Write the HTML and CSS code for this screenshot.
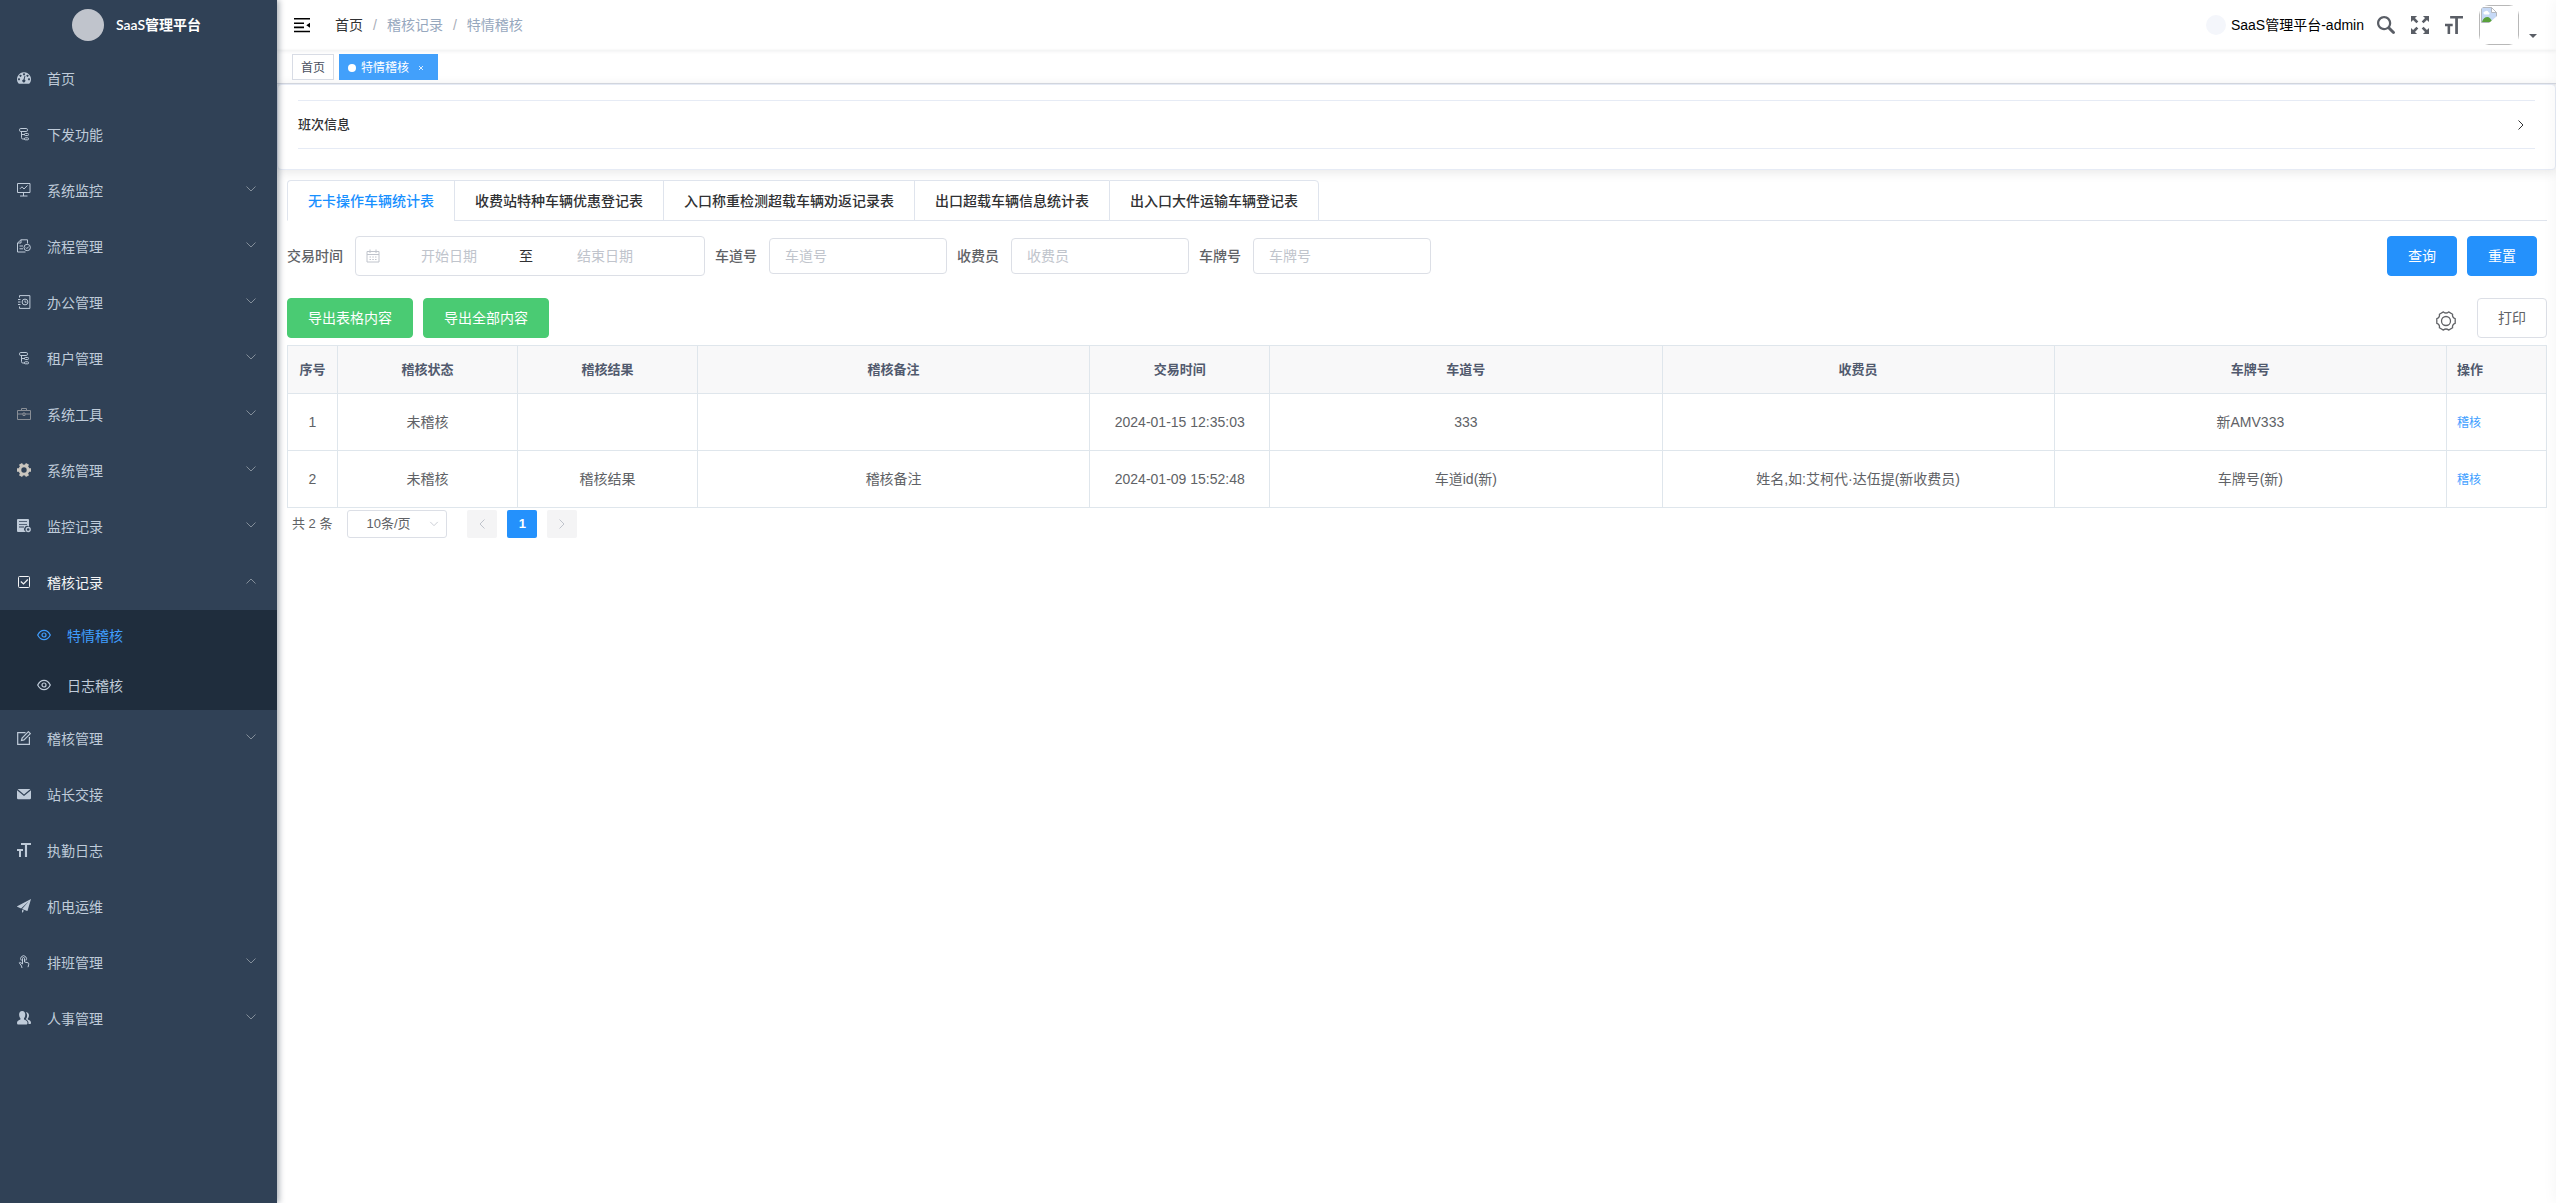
FILE: index.html
```html
<!DOCTYPE html>
<html lang="zh-CN">
<head>
<meta charset="utf-8">
<title>SaaS管理平台</title>
<link rel="stylesheet" href="styles.css">
</head>
<body>
<svg class="sprite" aria-hidden="true">
  <symbol id="i-down" viewBox="0 0 12 12"><path d="M1.500 3.500 6 8l4.500-4.500" fill="none" stroke="currentColor"/></symbol>
  <symbol id="i-tree" viewBox="0 0 14 14"><g fill="none" stroke="currentColor"><rect x="2.500" y="1.500" width="8" height="3" rx="1.300"/><path d="M4.500 4.500v6.200q0 1.300 1.300 1.300H8M4.500 7.500H8"/><rect x="7.500" y="6.500" width="4" height="2" rx=".8"/><rect x="7.500" y="10.800" width="4" height="2" rx=".8"/></g></symbol>
  <symbol id="i-size" viewBox="0 0 128 128"><path fill="currentColor" d="M0 54.857h54.796v18.286H36.531V128H18.265V73.143H0V54.857zm127.857-36.571H91.935V128H72.456V18.286H36.534V0h91.326l-.003 18.286z"/></symbol>
  <symbol id="i-eye" viewBox="0 0 14 14"><path d="M.7 7C2.200 4 4.400 2.300 7 2.300S11.800 4 13.300 7C11.800 10 9.600 11.700 7 11.700S2.200 10 .7 7z" fill="none" stroke="currentColor" stroke-width="1.200"/><circle cx="7" cy="7" r="2" fill="none" stroke="currentColor" stroke-width="1.200"/></symbol>
</svg>
<div class="app">
  <aside class="sidebar">
    <a class="logo" href="#"><span class="logo-mark"></span><span class="logo-title">SaaS管理平台</span></a>
    <nav class="menu">
      <a class="item" href="#"><svg class="icon" viewBox="0 0 14 14"><path fill="currentColor" fill-rule="evenodd" d="M7 1.300a7 7 0 0 1 5.700 11q-.3.400-.8.400H2.100q-.5 0-.8-.4A7 7 0 0 1 7 1.300zM7 2.300a1 1 0 1 0 .01 0zM3.500 3.800a1 1 0 1 0 .01 0zM10.500 3.800a1 1 0 1 0 .01 0zM2 7.300a1 1 0 1 0 .01 0zM12 7.300a1 1 0 1 0 .01 0zM7.600 4.800 6.500 8.400a1.500 1.500 0 1 0 1.100.2L8.400 5z"/></svg><span>首页</span></a>
      <a class="item" href="#"><svg class="icon"><use href="#i-tree"/></svg><span>下发功能</span></a>
      <a class="item" href="#"><svg class="icon" viewBox="0 0 14 14"><path fill="none" stroke="currentColor" d="M.5.500h12.500v9H.5zM6.500 9.500v3.500M3 13h7.500M3 5.800l2-2 2 2.200 3.500-3.600"/></svg><span>系统监控</span><svg class="arrow"><use href="#i-down"/></svg></a>
      <a class="item" href="#"><svg class="icon" viewBox="0 0 14 14"><g fill="none" stroke="currentColor"><path d="M10.500 4.500V.8H4L.5 4v9h8M4 .8V4H.5M2.500 7h3.500M2.500 9.800h3.500"/><circle cx="10.200" cy="8.500" r="3.200"/><path d="m8.800 8.500 1.100 1.100 1.800-2"/></g></svg><span>流程管理</span><svg class="arrow"><use href="#i-down"/></svg></a>
      <a class="item" href="#"><svg class="icon" viewBox="0 0 14 14"><g fill="none" stroke="currentColor"><path d="M2.500 2.500V.6h10.400v12.800H2.500v-1.900M1 4.500h2.500M1 7h2.500M1 9.500h2.500"/><circle cx="8" cy="7" r="2.900"/><path d="M8 5.500V7.200h1.500"/></g></svg><span>办公管理</span><svg class="arrow"><use href="#i-down"/></svg></a>
      <a class="item" href="#"><svg class="icon"><use href="#i-tree"/></svg><span>租户管理</span><svg class="arrow"><use href="#i-down"/></svg></a>
      <a class="item" href="#"><svg class="icon icon-gray" viewBox="0 0 14 14"><path fill="none" stroke="currentColor" d="M.5 3.500h13v9H.5zM4.500 3.500V1.500h5v2M.5 7H6M8 7h5.500M6 6h2v2.500H6z"/></svg><span>系统工具</span><svg class="arrow"><use href="#i-down"/></svg></a>
      <a class="item" href="#"><svg class="icon icon-sand" viewBox="0 0 14 14"><circle cx="7" cy="7" r="4.100" fill="none" stroke="currentColor" stroke-width="2.800"/><path stroke="currentColor" stroke-width="3.600" d="M10.900 7H14M3.100 7H0M8.900 10.400l1.600 2.700M5.100 3.600 3.500.9M5.100 10.400l-1.600 2.700M8.900 3.600l1.600-2.700"/></svg><span>系统管理</span><svg class="arrow"><use href="#i-down"/></svg></a>
      <a class="item" href="#"><svg class="icon" viewBox="0 0 14 14"><path fill="currentColor" fill-rule="evenodd" d="M1 0h10q1 0 1 1v6.600a3 3 0 0 0-3.600 4.900l.5.500H1q-1 0-1-1V1q0-1 1-1zM2 2.200v.9h8v-.9zM2 4.900v.9h8v-.9zM2 7.600v.9h5v-.9z"/><circle cx="11.200" cy="10.500" r="2" fill="none" stroke="currentColor" stroke-width="1.300"/></svg><span>监控记录</span><svg class="arrow"><use href="#i-down"/></svg></a>
      <a class="item item-open" href="#"><svg class="icon" viewBox="0 0 14 14"><rect x="1.500" y="1.500" width="11" height="11" rx="1" fill="none" stroke="currentColor"/><path d="M3.800 6.500 6.500 9l4.300-4.500" fill="none" stroke="currentColor" stroke-width="1.200"/></svg><span>稽核记录</span><svg class="arrow arrow-up"><use href="#i-down"/></svg></a>
      <div class="submenu">
        <a class="item item-active" href="#"><svg class="icon"><use href="#i-eye"/></svg><span>特情稽核</span></a>
        <a class="item" href="#"><svg class="icon"><use href="#i-eye"/></svg><span>日志稽核</span></a>
      </div>
      <a class="item" href="#"><svg class="icon" viewBox="0 0 14 14"><path fill="none" stroke="currentColor" stroke-width="1.200" d="M8.500 1.600H.7v11.700h11.700V6M4.500 9.500l.6-2.500 6.300-6.300 1.900 1.900L7 8.900z"/></svg><span>稽核管理</span><svg class="arrow"><use href="#i-down"/></svg></a>
      <a class="item" href="#"><svg class="icon" viewBox="0 0 14 14"><path fill="currentColor" d="M0 3.200 7 8.900l7-5.700V11q0 1.200-1.200 1.200H1.200Q0 12.200 0 11zM.6 2 1.200 1.900h11.600l.6.100L7 7.400z"/></svg><span>站长交接</span></a>
      <a class="item" href="#"><svg class="icon"><use href="#i-size"/></svg><span>执勤日志</span></a>
      <a class="item" href="#"><svg class="icon" viewBox="0 0 128 128"><path fill="currentColor" d="M1.482 70.131l36.204 16.180 69.932-65.485-61.380 70.594 46.435 18.735c1.119.425 2.397-.17 2.797-1.363v-.085L127.998.047 1.322 65.874c-1.120.597-1.519 1.959-1.040 3.151.32.511.72.937 1.200 1.107zm44.676 57.821L64.220 107.260l-18.062-7.834v28.527z"/></svg><span>机电运维</span></a>
      <a class="item" href="#"><svg class="icon" viewBox="0 0 14 14"><path fill="none" stroke="currentColor" d="M4.300 5.500a2.900 2.900 0 1 1 4.500 0M5.500 9V3.500a1 1 0 0 1 2 0V7l3.500.8q1 .3.800 1.400l-.8 3M5.500 9 3.700 7.500q-1-.6-1.400.3L4.500 11l.5 2"/></svg><span>排班管理</span><svg class="arrow"><use href="#i-down"/></svg></a>
      <a class="item" href="#"><svg class="icon" viewBox="0 0 14 14"><path fill="currentColor" d="M5.200 0C7.200 0 8.300 1.500 8.300 3.700c0 1.500-.5 2.800-1.300 3.600v1.200c1.800.7 3.400 1.500 3.500 3.300q0 1.700-.8 1.700H.8q-.8 0-.8-1.700c.1-1.800 1.700-2.600 3.400-3.300V7.300C2.600 6.500 2.100 5.200 2.100 3.700 2.100 1.500 3.200 0 5.200 0zM8.800 1.200c2-.2 3.200 1.200 3.200 3.100 0 1.400-.5 2.500-1.200 3.200v1c1.600.6 3.100 1.300 3.200 3q0 1.500-.7 1.500h-1.800c.2-2.500-.7-3.700-2.700-4.800.9-1 1.300-2.300 1.300-3.700 0-1.300-.4-2.400-1.300-3.300z"/></svg><span>人事管理</span><svg class="arrow"><use href="#i-down"/></svg></a>
    </nav>
  </aside>

  <div class="main">
    <header class="navbar">
      <button class="plain" aria-label="折叠菜单"><svg class="fold" viewBox="0 0 16 16"><path fill="#000" d="M0 1h16v1.600H0zM0 5.500h10v1.600H0zM0 9.600h10v1.600H0zM0 13.700h16v1.600H0zM16 5.700v5L12.300 8.200z"/></svg></button>
      <nav class="crumbs"><a href="#">首页</a><i>/</i><span>稽核记录</span><i>/</i><span>特情稽核</span></nav>
      <div class="tools">
        <span class="tenant"><span class="tenant-mark"></span>SaaS管理平台-admin</span>
        <button class="plain" aria-label="搜索"><svg class="tool" viewBox="0 0 128 128"><path fill="currentColor" d="M124.884 109.812L94.256 79.166c-.357-.357-.757-.629-1.129-.914a50.366 50.366 0 0 0 8.186-27.590C101.327 22.689 78.656 0 50.670 0 22.685 0 0 22.688 0 50.663c0 27.989 22.685 50.663 50.656 50.663 10.186 0 19.643-3.030 27.600-8.201.286.385.557.771.9 1.114l30.628 30.632a10.633 10.633 0 0 0 7.543 3.129c2.728 0 5.457-1.043 7.543-3.115 4.171-4.157 4.171-10.915.014-15.073M50.671 85.338C31.557 85.338 16 69.780 16 50.663c0-19.102 15.557-34.661 34.670-34.661 19.115 0 34.657 15.559 34.657 34.675 0 19.102-15.557 34.661-34.656 34.661"/></svg></button>
        <button class="plain" aria-label="全屏"><svg class="tool" viewBox="0 0 128 128"><path fill="currentColor" d="M38.470 52L52 38.462l-23.648-23.670L43.209 0H0v43.137l14.757-14.865L38.470 52zm74.773 47.726L89.526 76 76 89.536l23.648 23.672L84.795 128H128V84.863l-14.757 14.863zM89.538 52l23.668-23.648L128 43.207V0H84.866l14.865 14.757L76 38.464 89.538 52zM38.460 76L14.792 99.651 0 84.794V128h43.137l-14.865-14.757L52 89.540 38.460 76z"/></svg></button>
        <button class="plain" aria-label="布局大小"><svg class="tool"><use href="#i-size"/></svg></button>
        <button class="plain user" aria-label="用户菜单">
          <span class="avatar"><span class="photo"><svg width="16" height="16" viewBox="0 0 16 16"><path d="M.5.500h10l5 5v10H.5z" fill="#c6d9f6" stroke="#b4b8bf"/><path d="M10.500.5v5h5z" fill="#fff" stroke="#b4b8bf"/><path d="M2.500 6.500a1.500 1.500 0 0 1 1.500-2 2 2 0 0 1 3.500.7 1.200 1.200 0 0 1 .3 2.300H3.500z" fill="#fff"/><path d="M1 15q1.500-5 5.500-5 2.500 0 5 5z" fill="#5aa13c"/><path d="M8 16l8-7v7z" fill="#fff"/></svg></span></span>
          <svg class="caret" viewBox="0 0 8 4"><path d="M0 0h8L4 4z" fill="currentColor"/></svg>
        </button>
      </div>
    </header>

    <div class="tags">
      <a class="tag" href="#">首页</a>
      <a class="tag tag-active" href="#"><span class="dot"></span>特情稽核<svg class="close" viewBox="0 0 16 16"><path d="m6 6 4 4m0-4-4 4" stroke="currentColor" stroke-width=".8"/></svg></a>
    </div>

    <section class="card">
      <button class="collapse"><span>班次信息</span><svg class="arrow-right"><use href="#i-down"/></svg></button>
    </section>

    <main class="content">
      <div class="tabs">
        <button class="tab tab-active">无卡操作车辆统计表</button>
        <button class="tab">收费站特种车辆优惠登记表</button>
        <button class="tab">入口称重检测超载车辆劝返记录表</button>
        <button class="tab">出口超载车辆信息统计表</button>
        <button class="tab">出入口大件运输车辆登记表</button>
      </div>

      <form class="filters">
        <div class="field"><label for="start">交易时间</label>
          <div class="range">
            <svg class="cal" viewBox="0 0 14 14"><path fill="none" stroke="currentColor" d="M1 2.500h12v10.500H1zM1 5.500h12M4 .5V4M10 .5V4M3.500 8h1.500M6.300 8h1.500M9 8h1.500M3.500 10.500h1.500M6.300 10.500h1.500M9 10.500h1.500"/></svg>
            <input id="start" placeholder="开始日期"><span>至</span><input aria-label="结束日期" placeholder="结束日期">
          </div>
        </div>
        <div class="field"><label for="lane">车道号</label><input class="input" id="lane" placeholder="车道号"></div>
        <div class="field"><label for="toll">收费员</label><input class="input" id="toll" placeholder="收费员"></div>
        <div class="field"><label for="plate">车牌号</label><input class="input" id="plate" placeholder="车牌号"></div>
        <div class="actions"><button type="button" class="btn btn-primary">查询</button><button type="button" class="btn btn-primary">重置</button></div>
      </form>

      <div class="toolbar">
        <button class="btn btn-success">导出表格内容</button>
        <button class="btn btn-success">导出全部内容</button>
        <button class="plain settings" aria-label="列设置"><svg class="gear" viewBox="0 0 20 20"><g fill="none" stroke="currentColor" stroke-width="1.300" stroke-linejoin="round"><path d="M19.200 7.700v4.600Q15.900 13.400 16.600 16.800L12.600 19.100Q10 16.800 7.400 19.100L3.400 16.800Q4.100 13.400.8 12.300V7.700Q4.100 6.600 3.400 3.200L7.400.9Q10 3.200 12.600.9L16.600 3.200Q15.900 6.600 19.200 7.700z"/><circle cx="10" cy="10" r="4.500"/></g></svg></button>
        <button class="btn">打印</button>
      </div>

      <table class="grid">
        <colgroup><col class="c-no"><col class="c-mid"><col class="c-mid"><col><col class="c-mid"><col><col><col><col class="c-op"></colgroup>
        <thead><tr><th>序号</th><th>稽核状态</th><th>稽核结果</th><th>稽核备注</th><th>交易时间</th><th>车道号</th><th>收费员</th><th>车牌号</th><th class="op">操作</th></tr></thead>
        <tbody>
          <tr><td>1</td><td>未稽核</td><td></td><td></td><td>2024-01-15 12:35:03</td><td>333</td><td></td><td>新AMV333</td><td class="op"><a href="#">稽核</a></td></tr>
          <tr><td>2</td><td>未稽核</td><td>稽核结果</td><td>稽核备注</td><td>2024-01-09 15:52:48</td><td>车道id(新)</td><td>姓名,如:艾柯代·达伍提(新收费员)</td><td>车牌号(新)</td><td class="op"><a href="#">稽核</a></td></tr>
        </tbody>
      </table>

      <div class="pager">
        <span>共 2 条</span>
        <div class="size"><select aria-label="每页条数"><option>10条/页</option></select><svg class="size-arrow"><use href="#i-down"/></svg></div>
        <div class="pages">
          <button class="page" aria-label="上一页" disabled><svg class="step step-prev"><use href="#i-down"/></svg></button>
          <button class="page page-active">1</button>
          <button class="page" aria-label="下一页" disabled><svg class="step step-next"><use href="#i-down"/></svg></button>
        </div>
      </div>
    </main>
  </div>
</div>
</body>
</html>
```
FILE: styles.css
```css
* { box-sizing: border-box; }
body { margin: 0; background: #fff; color: #303133; font: 14px/20px "Liberation Sans", "Noto Sans CJK SC", sans-serif; }
a { color: inherit; text-decoration: none; }
button, input, select { font: inherit; color: inherit; }
button { cursor: pointer; }
.sprite { position: absolute; width: 0; height: 0; }
.plain { display: flex; padding: 0; border: 0; background: none; }

.app { display: flex; min-height: 100vh; }
.app::after { content: ""; position: fixed; top: 0; bottom: 0; left: 100%; width: 20px; box-shadow: 0 0 15px rgba(0, 0, 0, .05); }

.sidebar { flex: none; width: 277px; background: #304156; box-shadow: 2px 0 6px rgba(0, 21, 41, .35); position: relative; z-index: 1; }
.logo { display: flex; align-items: center; justify-content: center; gap: 12px; height: 50px; padding-right: 4px; color: #fff; font: 600 14px/20px Lato, "Noto Sans CJK SC", sans-serif; }
.logo-mark { width: 32px; height: 32px; border-radius: 50%; background: #c0c4cc; }
.item { display: flex; align-items: center; height: 56px; padding: 0 20px 0 17px; color: #bfcbd9; }
.item span { padding-top: 2px; }
.icon { width: 14px; height: 14px; margin-right: 16px; }
.icon-gray { color: #8a8f96; }
.icon-sand { color: #c9c5be; }
.arrow { width: 12px; height: 12px; margin: 0 0 2px auto; color: #838e9a; }
.arrow-up { transform: rotate(180deg); }
.item-open { color: #f4f4f5; }
.submenu { background: #1f2d3d; }
.submenu .item { height: 50px; padding-left: 37px; }
.submenu .item-active { color: #409eff; }

.main { flex: 1; min-width: 0; }
.navbar { display: flex; align-items: center; height: 50px; padding: 0 19px 0 17px; box-shadow: 0 1px 4px rgba(0, 21, 41, .08); }
.fold { width: 16px; height: 16px; }
.crumbs { display: flex; margin-left: 25px; color: #97a8be; }
.crumbs a { color: #303133; }
.crumbs i { margin: 0 10px; color: #a9aeb8; font-style: normal; }
.tools { display: flex; align-items: center; gap: 16px; margin-left: auto; color: #5a5e66; }
.tenant { display: flex; align-items: center; gap: 5px; margin-right: -3px; color: #000; }
.tenant-mark { width: 20px; height: 20px; border-radius: 50%; background: #f4f6fb; }
.tool { width: 18px; height: 18px; }
.user { align-items: flex-end; gap: 10px; }
.avatar { width: 40px; height: 40px; border-radius: 10px; overflow: hidden; }
.photo { display: flex; width: 40px; height: 40px; padding: 1px; border: 1px solid #b8b8b8; }
.caret { width: 8px; height: 4px; margin-bottom: 7px; }

.tags { display: flex; gap: 5px; height: 34px; padding: 4px 15px; border-bottom: 1px solid #d8dce5; box-shadow: 0 1px 3px rgba(0, 0, 0, .12); font-size: 12px; }
.tag { display: flex; align-items: center; height: 26px; padding: 2px 8px 0; border: 1px solid #d8dce5; background: #fff; color: #495060; }
.tag-active { border-color: #42a0fb; background: #42a0fb; color: #fff; }
.dot { width: 8px; height: 8px; margin-right: 5px; border-radius: 50%; background: #fff; }
.close { width: 16px; height: 16px; margin-left: 4px; }

.card { padding: 15px 20px 20px; border: 1px solid #e6ebf5; border-radius: 4px; background: #fff; box-shadow: 0 2px 12px rgba(0, 0, 0, .1); }
.collapse { display: flex; align-items: center; width: 100%; height: 49px; padding: 0 8px 0 0; border: solid #e6ebf5; border-width: 1px 0; background: #fff; font-size: 13px; font-weight: 500; }
.arrow-right { width: 12px; height: 12px; margin-left: auto; transform: rotate(-90deg); }

.content { padding: 10px 9px 10px 10px; }
.tabs { display: flex; height: 41px; border-bottom: 1px solid #dfe4ed; }
.tab { height: 41px; padding: 0 20px; border: solid #dfe4ed; border-width: 1px 0 1px 1px; background: #fff; font-weight: 500; }
.tab:first-child { border-top-left-radius: 4px; }
.tab:last-child { border-right-width: 1px; border-top-right-radius: 4px; }
.tab-active { border-bottom-color: #fff; color: #1890ff; }

.filters { display: flex; align-items: center; gap: 10px; margin-top: 15px; }
.field { display: flex; align-items: center; gap: 12px; color: #606266; font-weight: 500; }
.range { display: flex; align-items: center; width: 350px; height: 40px; padding: 0 10px; border: 1px solid #dcdfe6; border-radius: 4px; color: #303133; font-weight: 400; }
.range input { width: 136px; height: 36px; padding: 0 0 0 2px; border: 0; text-align: center; background: none; }
.range span { width: 20px; text-align: center; }
.cal { width: 14px; height: 14px; color: #c0c4cc; }
.input { width: 178px; height: 36px; padding: 0 15px; border: 1px solid #dcdfe6; border-radius: 4px; font-weight: 400; }
::placeholder { color: #c0c4cc; opacity: 1; }
.actions { display: flex; gap: 10px; margin: 0 10px 0 auto; }
.btn { height: 40px; padding: 0 20px; border: 1px solid #dcdfe6; border-radius: 4px; background: #fff; color: #606266; }
.btn-primary { border-color: #2491fc; background: #2491fc; color: #fff; }
.btn-success { border-color: #4acb73; background: #4acb73; color: #fff; }

.toolbar { display: flex; gap: 10px; margin-top: 22px; }
.settings { align-items: center; margin: 6px 11px 0 auto; color: #606266; }
.gear { width: 20px; height: 20px; }

.grid { width: 100%; margin-top: 7px; border: solid #dfe6ec; border-width: 1px 0 0 1px; border-collapse: separate; border-spacing: 0; table-layout: fixed; color: #606266; }
.c-no { width: 50px; }
.c-mid { width: 180px; }
.c-op { width: 100px; }
.grid th, .grid td { height: 57px; padding: 0 10px; border: solid #dfe6ec; border-width: 0 1px 1px 0; text-align: center; }
.grid th { height: 48px; background: #f8f8f9; color: #515a6e; font-size: 13px; font-weight: 600; }
.grid .op { text-align: left; }
.grid td a { color: #409eff; font-size: 12px; }

.pager { display: flex; align-items: center; margin-top: 2px; padding-left: 5px; color: #606266; font-size: 13px; }
.size { display: flex; align-items: center; margin-left: 15px; }
.size select { width: 100px; height: 28px; padding: 0 24px 0 18px; border: 1px solid #dcdfe6; border-radius: 3px; background: #fff; appearance: none; }
.size-arrow { width: 10px; height: 10px; margin-left: -18px; margin-right: 8px; color: #c0c4cc; pointer-events: none; }
.pages { display: flex; gap: 10px; margin-left: 20px; }
.page { display: flex; align-items: center; justify-content: center; width: 30px; height: 28px; padding: 0; border: 0; border-radius: 2px; background: #f4f4f5; color: #c0c4cc; font-weight: 700; }
.page-active { background: #2491fc; color: #fff; }
.step { width: 12px; height: 12px; }
.step-prev { transform: rotate(90deg); }
.step-next { transform: rotate(-90deg); }
```
